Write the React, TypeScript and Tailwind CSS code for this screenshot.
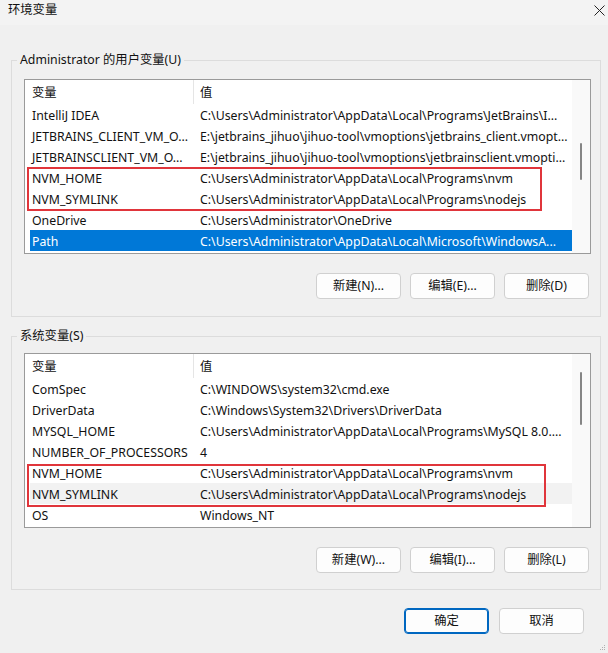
import type { ReactNode } from "react";

type Row = [string, string];

const userVars: Row[] = [
  ["IntelliJ IDEA", "C:\\Users\\Administrator\\AppData\\Local\\Programs\\JetBrains\\I..."],
  ["JETBRAINS_CLIENT_VM_O...", "E:\\jetbrains_jihuo\\jihuo-tool\\vmoptions\\jetbrains_client.vmopt..."],
  ["JETBRAINSCLIENT_VM_O...", "E:\\jetbrains_jihuo\\jihuo-tool\\vmoptions\\jetbrainsclient.vmopti..."],
  ["NVM_HOME", "C:\\Users\\Administrator\\AppData\\Local\\Programs\\nvm"],
  ["NVM_SYMLINK", "C:\\Users\\Administrator\\AppData\\Local\\Programs\\nodejs"],
  ["OneDrive", "C:\\Users\\Administrator\\OneDrive"],
  ["Path", "C:\\Users\\Administrator\\AppData\\Local\\Microsoft\\WindowsA..."],
];

const systemVars: Row[] = [
  ["ComSpec", "C:\\WINDOWS\\system32\\cmd.exe"],
  ["DriverData", "C:\\Windows\\System32\\Drivers\\DriverData"],
  ["MYSQL_HOME", "C:\\Users\\Administrator\\AppData\\Local\\Programs\\MySQL 8.0...."],
  ["NUMBER_OF_PROCESSORS", "4"],
  ["NVM_HOME", "C:\\Users\\Administrator\\AppData\\Local\\Programs\\nvm"],
  ["NVM_SYMLINK", "C:\\Users\\Administrator\\AppData\\Local\\Programs\\nodejs"],
  ["OS", "Windows_NT"],
];

// List view with header, rows and a thin overlay scrollbar
const VarList = ({
  rows,
  selected,
  hovered,
  thumbTop,
  thumbHeight,
  mark,
}: {
  rows: Row[];
  selected?: number;
  hovered?: number;
  thumbTop: number;
  thumbHeight: number;
  mark: ReactNode;
}) => (
  <div className="relative flex h-[175px] border border-[#9a9a9a] bg-white">
    <div className="flex-1 pl-[5px]">
      {/* Column header */}
      <div className="flex h-[24px] items-center">
        <div className="w-[163px] pl-[2px] pt-[3px]">变量</div>
        <div className="h-full w-px bg-[#e5e5e5]" />
        <div className="pl-[6px] pt-[3px]">值</div>
      </div>
      {rows.map(([name, value], i) => (
        <div
          key={name + i}
          className={`flex h-[21px] items-center whitespace-nowrap pt-[3px] ${
            i === selected ? "bg-[#0078d7] text-white" : i === hovered ? "bg-[#f2f2f2]" : ""
          }`}
        >
          <div className="w-[164px] overflow-hidden pl-[2px]">{name}</div>
          <div className="pl-[6px]">{value}</div>
        </div>
      ))}
    </div>
    {/* Scrollbar */}
    <div className="relative w-[18px] bg-[#f9f9f9]">
      <div
        className="absolute left-[8px] w-[2px] rounded-full bg-[#858585]"
        style={{ top: thumbTop, height: thumbHeight }}
      />
    </div>
    {mark}
  </div>
);

const Button = ({ children, primary }: { children: ReactNode; primary?: boolean }) => (
  <button
    className={`flex h-[26px] w-[85px] items-center justify-center rounded-[4px] bg-[#fdfdfd] pt-[1px] ${
      primary ? "border border-[#0067c0] shadow-[inset_0_0_0_1px_#0067c0]" : "border border-[#d0d0d0]"
    }`}
  >
    {children}
  </button>
);

const Group = ({ title, children }: { title: string; children: ReactNode }) => (
  <fieldset className="ml-[11px] mr-[7px] border border-[#dcdcdc] p-0">
    <legend className="ml-[5px] px-[3px] leading-[16px]">{title}</legend>
    {children}
  </fieldset>
);

export default function App() {
  return (
    <div className="relative h-[653px] w-[608px] overflow-hidden bg-[#f0f0f0] font-['Noto_Sans','Noto_Sans_CJK_SC',sans-serif] text-[12.3px] text-[#111]">
      {/* Title bar */}
      <div className="flex h-[25px] items-center justify-between bg-[#f3f3f3] pl-[8px] pr-[3px]">
        <span className="-mt-[5px]">环境变量</span>
        <svg width="11" height="11" viewBox="0 0 11 11" className="-mt-[4px]">
          <path d="M0.5 0.5L10.5 10.5M10.5 0.5L0.5 10.5" stroke="#222" strokeWidth="1" />
        </svg>
      </div>

      <div className="mt-[27px]">
        <Group title="Administrator 的用户变量(U)">
          <div className="px-[12px] pb-[17px] pt-[11px] pr-[9px]">
            <VarList
              rows={userVars}
              selected={6}
              thumbTop={63}
              thumbHeight={37}
              mark={
                <div className="absolute left-[2px] top-[87px] h-[44px] w-[515px] border-2 border-[#e0353b]" />
              }
            />
            <div className="mt-[19px] flex justify-end gap-[9px] pr-[2px]">
              <Button>新建(N)...</Button>
              <Button>编辑(E)...</Button>
              <Button>删除(D)</Button>
            </div>
          </div>
        </Group>
      </div>

      <div className="mt-[11px]">
        <Group title="系统变量(S)">
          <div className="px-[12px] pb-[16px] pt-[9px] pr-[9px]">
            <VarList
              rows={systemVars}
              hovered={5}
              thumbTop={18}
              thumbHeight={53}
              mark={
                <div className="absolute left-[2px] top-[110px] h-[43px] w-[519px] border-2 border-[#e0353b]" />
              }
            />
            <div className="mt-[19px] flex justify-end gap-[9px] pr-[2px]">
              <Button>新建(W)...</Button>
              <Button>编辑(I)...</Button>
              <Button>删除(L)</Button>
            </div>
          </div>
        </Group>
      </div>

      {/* Dialog buttons */}
      <div className="mt-[18px] flex justify-end gap-[10px] pr-[24px]">
        <Button primary>确定</Button>
        <Button>取消</Button>
      </div>

      {/* Resize grip */}
      <svg width="6" height="6" viewBox="0 0 6 6" className="absolute bottom-[2px] right-[2px]">
        <rect x="4" y="0" width="1" height="1" fill="#b0b0b0" />
        <rect x="2" y="2" width="1" height="1" fill="#b0b0b0" />
        <rect x="4" y="2" width="1" height="1" fill="#b0b0b0" />
        <rect x="0" y="4" width="1" height="1" fill="#b0b0b0" />
        <rect x="2" y="4" width="1" height="1" fill="#b0b0b0" />
        <rect x="4" y="4" width="1" height="1" fill="#b0b0b0" />
      </svg>
    </div>
  );
}
